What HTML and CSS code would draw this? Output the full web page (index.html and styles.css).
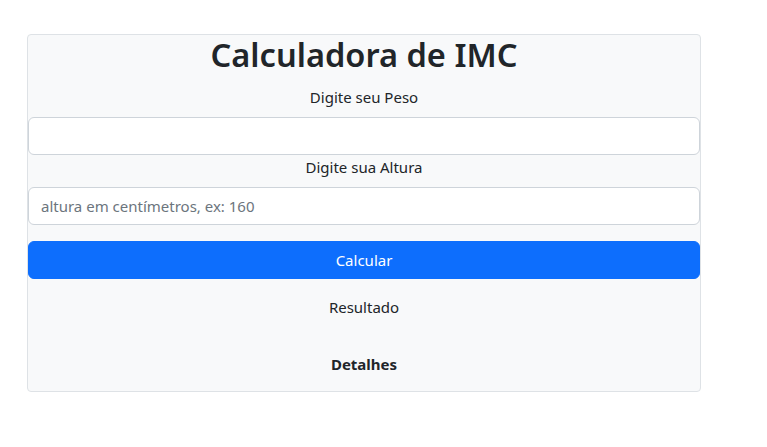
FILE: index.html
```html
<!DOCTYPE html>
<html lang="pt-BR">
<head>
<meta charset="utf-8">
<title>Calculadora de IMC</title>
<link rel="stylesheet" href="styles.css">
</head>
<body>
<main class="page">
  <section class="card">
    <h1 class="title">Calculadora de IMC</h1>
    <label class="label" for="peso">Digite seu Peso</label>
    <input class="field" id="peso" type="text">
    <label class="label" for="altura">Digite sua Altura</label>
    <input class="field" id="altura" type="text" placeholder="altura em centímetros, ex: 160">
    <button class="btn" type="button">Calcular</button>
    <p class="result">Resultado</p>
    <p class="details">Detalhes</p>
  </section>
</main>
</body>
</html>
```

FILE: styles.css
```css
* { box-sizing: border-box; }
html, body { margin: 0; padding: 0; background: #fff; }
body {
  font-family: "Noto Sans", "Open Sans", sans-serif;
  font-size: 15px;
  line-height: 24px;
  color: #212529;
}
.page {
  padding: 34px 0 0 27px;
}
.card {
  width: 674px;
  background: #f8f9fa;
  border: 1px solid #dee2e6;
  border-radius: 4px;
  display: flex;
  flex-direction: column;
  text-align: center;
}
.title {
  margin: 0 0 10px;
  font-size: 32.6px;
  line-height: 40px;
  font-weight: 600;
}
.label {
  display: block;
  line-height: 24px;
  margin-bottom: 8px;
}
.field {
  display: block;
  width: 100%;
  height: 38px;
  margin: 0;
  padding: 6px 12px;
  font: inherit;
  color: #212529;
  background: #fff;
  border: 1px solid #ced4da;
  border-radius: 6px;
  outline: none;
}
.field::placeholder { color: #6c757d; opacity: 1; }
.btn {
  display: block;
  width: 100%;
  height: 38px;
  margin: 16px 0 0;
  padding: 6px 12px;
  font: inherit;
  color: #fff;
  background: #0d6efd;
  border: 1px solid #0d6efd;
  border-radius: 6px;
}
.result {
  margin: 16px 0 32px;
  line-height: 24px;
}
.details {
  margin: 1px 0 15px;
  line-height: 24px;
  font-weight: 700;
}
```
